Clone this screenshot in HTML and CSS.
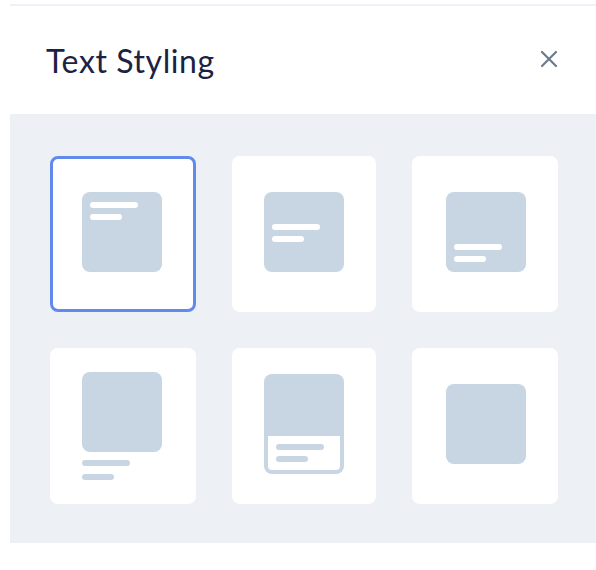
FILE: index.html
```html
<!DOCTYPE html>
<html>
  <head>
    <meta charset="utf-8">
    <title>Text Styling</title>
    <meta name="viewport" content="width=device-width, initial-scale=1.0" />
    <link rel="stylesheet" href="styles.css">
  </head>
  <body>
    <div class="panel">
      <div class="panel-head">
        <h2 class="panel-title">Text Styling</h2>
        <button class="close" aria-label="Close">
          <svg width="18" height="18" viewBox="0 0 18 18">
            <path d="M2 2 L16 16 M16 2 L2 16" stroke="currentColor" stroke-width="2.2" stroke-linecap="round" fill="none"/>
          </svg>
        </button>
      </div>

      <div class="styles">
        <!-- text over the image, top -->
        <div class="style selected">
          <div class="thumb top">
            <span class="bar long"></span>
            <span class="bar short"></span>
          </div>
        </div>

        <!-- text over the image, middle -->
        <div class="style">
          <div class="thumb middle">
            <span class="bar long"></span>
            <span class="bar short"></span>
          </div>
        </div>

        <!-- text over the image, bottom -->
        <div class="style">
          <div class="thumb bottom">
            <span class="bar long"></span>
            <span class="bar short"></span>
          </div>
        </div>

        <!-- text below the image -->
        <div class="style below">
          <div class="stack">
            <div class="thumb"></div>
            <div class="caption">
              <span class="bar long"></span>
              <span class="bar short"></span>
            </div>
          </div>
        </div>

        <!-- text in a box under the image -->
        <div class="style boxed">
          <div class="framed">
            <div class="framed-image"></div>
            <div class="framed-text">
              <span class="bar long"></span>
              <span class="bar short"></span>
            </div>
          </div>
        </div>

        <!-- no text -->
        <div class="style">
          <div class="thumb"></div>
        </div>
      </div>
    </div>
  </body>
</html>
```

FILE: styles.css
```css
body {
  margin: 0;
  background-color: white;
  font-family: "Lato", "Noto Sans", sans-serif;
}

.panel {
  margin: 4px 0 0 10px;
  border-top: 2px solid #eef1f5;
}

.panel-head {
  height: 108px;
  display: flex;
  align-items: center;
  justify-content: space-between;
  padding: 0 38px 0 36px;
}
.panel-title {
  margin: 0;
  font-size: 32px;
  font-weight: 400;
  color: #1c2242;
  letter-spacing: 0.6px;
}
.close {
  border: none;
  background: none;
  padding: 0;
  width: 18px;
  height: 18px;
  color: #6c7a8b;
  margin-top: -3px;
}
.close svg {
  display: block;
}

.styles {
  background-color: #edf1f6;
  padding: 42px 38px 39px 40px;
  display: grid;
  grid-template-columns: 146px 144px 146px;
  justify-content: space-between;
  row-gap: 36px;
}

.style {
  box-sizing: border-box;
  height: 156px;
  background-color: white;
  border-radius: 8px;
  display: flex;
  align-items: center;
  justify-content: center;
  padding-bottom: 4px;
}
/* outer columns sit a touch off-centre */
.style:nth-child(3n+1) {
  padding-right: 2px;
}
.style:nth-child(3n) {
  padding-left: 2px;
}
.style.selected {
  border: 3px solid #618aec;
  padding-bottom: 4px;
  padding-right: 2px;
}
.style.below {
  padding-bottom: 0;
}
.style.boxed {
  padding-bottom: 0;
}

.thumb {
  box-sizing: border-box;
  width: 80px;
  height: 80px;
  border-radius: 8px;
  background-color: #c8d5e2;
  display: flex;
  flex-direction: column;
  gap: 6px;
  padding: 10px 8px;
}
.thumb.middle {
  justify-content: center;
  padding-top: 12px;
}
.thumb.bottom {
  justify-content: flex-end;
}

.bar {
  display: block;
  height: 6px;
  border-radius: 3px;
  background-color: white;
}
.bar.long {
  width: 48px;
}
.bar.short {
  width: 32px;
}

.stack {
  display: flex;
  flex-direction: column;
}
.caption {
  display: flex;
  flex-direction: column;
  gap: 8px;
  margin-top: 8px;
}
.caption .bar,
.framed-text .bar {
  background-color: #c8d5e2;
}

.framed {
  width: 80px;
  margin-bottom: 4px;
}
.framed-image {
  height: 62px;
  background-color: #c8d5e2;
  border-radius: 8px 8px 0 0;
}
.framed-text {
  border: 4px solid #c8d5e2;
  border-top: none;
  border-radius: 0 0 8px 8px;
  padding: 8px;
  display: flex;
  flex-direction: column;
  gap: 6px;
}
```
